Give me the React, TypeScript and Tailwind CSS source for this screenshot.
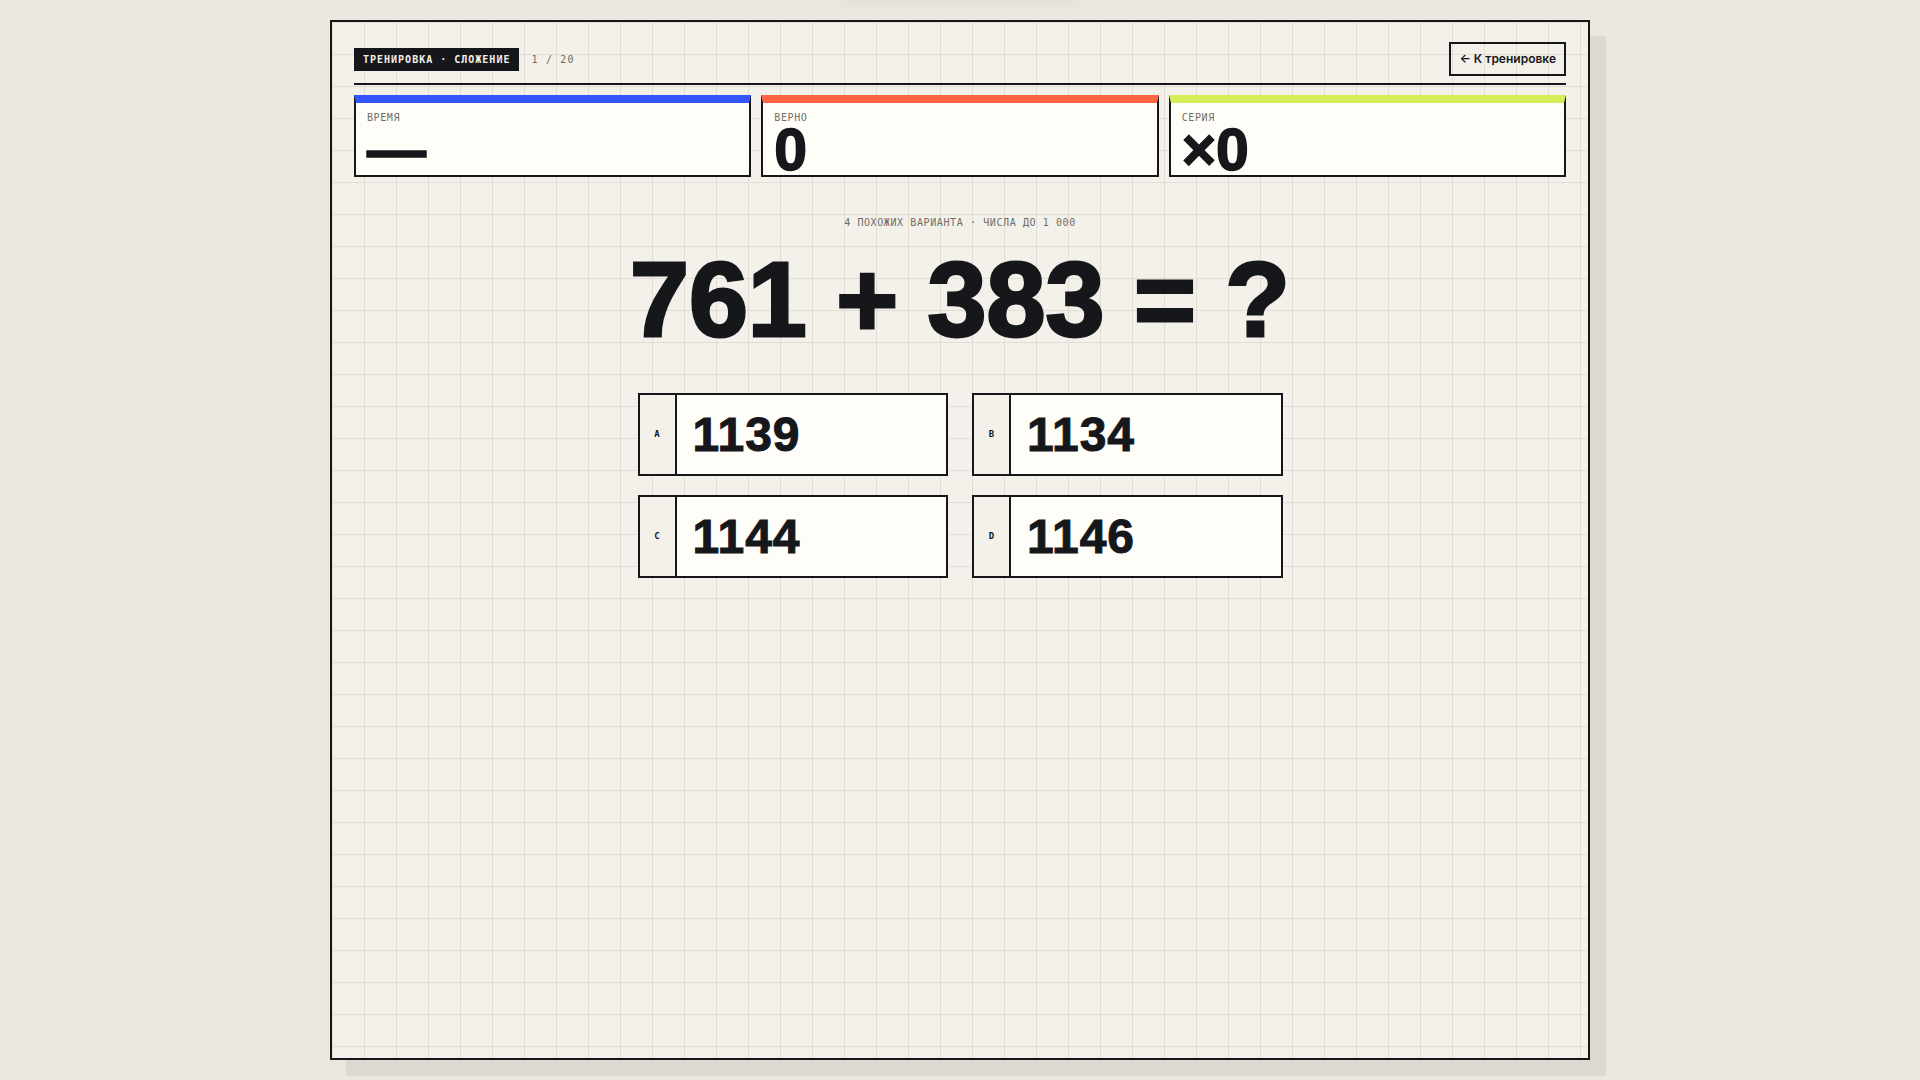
const mono = "font-['DejaVu_Sans_Mono',monospace]";
const display = "font-['Liberation_Sans',Arial,sans-serif]";

type Stat = {
	label: string;
	value: string;
	accent: string;
};

const stats: Stat[] = [
	{ label: "Время", value: "—", accent: "border-t-[#3355ff]" },
	{ label: "Верно", value: "0", accent: "border-t-[#ff6542]" },
	{ label: "Серия", value: "×0", accent: "border-t-[#d7ee58]" },
];

const options = [
	{ key: "A", value: 1139 },
	{ key: "B", value: 1134 },
	{ key: "C", value: 1144 },
	{ key: "D", value: 1146 },
];

function StatCard({ stat }: { stat: Stat }) {
	return (
		<div
			className={`flex h-[82px] flex-col border-2 border-t-8 border-[#16171b] ${stat.accent} bg-[#fefdf8] px-[11px] pt-[8px]`}
		>
			<span
				className={`${mono} h-[15px] text-[10px] leading-[13px] tracking-[0.06em] text-[#6f6d68] uppercase`}
			>
				{stat.label}
			</span>
			<span
				className={`${display} mt-[2px] text-[59px] leading-[44px] font-bold text-[#16171b] [-webkit-text-stroke:1.5px_#16171b]`}
			>
				{stat.value}
			</span>
		</div>
	);
}

function Option({ k, value }: { k: string; value: number }) {
	return (
		<button
			type="button"
			className="flex h-[83px] border-2 border-[#16171b] bg-[#fefdf8] text-left"
		>
			<span
				className={`${mono} flex w-[37px] shrink-0 items-center justify-center border-r-2 border-[#16171b] bg-[#f3f1ea] text-[9px] font-bold text-[#16171b]`}
			>
				{k}
			</span>
			<span
				className={`${display} flex items-center pl-[16px] text-[48px] font-bold tracking-[0.02em] text-[#16171b] [-webkit-text-stroke:1px_#16171b]`}
			>
				{value}
			</span>
		</button>
	);
}

export default function App() {
	return (
		<div className="relative min-h-screen overflow-hidden bg-[#ebe7de] py-[20px]">
			<div className="absolute -top-[52px] left-1/2 h-[50px] w-[226px] -translate-x-1/2 bg-[#ebe7de] shadow-[0_2px_14px_rgba(0,0,0,0.07)]" />

			<main className="mx-auto flex h-[1040px] w-[1260px] flex-col border-2 border-[#16171b] bg-[#f3f1ea] bg-[linear-gradient(to_right,#e2ded5_1px,transparent_1px),linear-gradient(to_bottom,#e2ded5_1px,transparent_1px)] bg-[size:32px_32px] px-[22px] pt-[20px] shadow-[16px_16px_0_#dcd9d1]">
				<header className="flex items-center justify-between border-b-2 border-[#16171b] pb-[7px]">
					<div className="flex items-center gap-[12px]">
						<span
							className={`${mono} bg-[#16171b] px-[9px] py-[5px] text-[10px] leading-[13px] font-bold tracking-[0.1em] text-[#f3f1ea] uppercase`}
						>
							Тренировка · Сложение
						</span>
						<span
							className={`${mono} text-[10px] tracking-[0.12em] text-[#6f6d68]`}
						>
							1 / 20
						</span>
					</div>
					<button
						type="button"
						className="h-[34px] border-2 border-[#16171b] px-[8px] font-['Inter',sans-serif] text-[12px] font-semibold text-[#16171b]"
					>
						← К тренировке
					</button>
				</header>

				<section className="mt-[10px] grid grid-cols-3 gap-[10px]">
					{stats.map((s) => (
						<StatCard key={s.label} stat={s} />
					))}
				</section>

				<section className="mt-[39px] flex flex-col items-center">
					<p
						className={`${mono} text-[10px] leading-[13px] tracking-[0.06em] text-[#6f6d68] uppercase`}
					>
						4 похожих варианта · числа до 1 000
					</p>
					<h1
						className={`${display} mt-[17px] text-[106px] leading-none font-bold text-[#16171b] [-webkit-text-stroke:3px_#16171b]`}
					>
						761 + 383 = ?
					</h1>
					<div className="mt-[41px] grid w-[645px] grid-cols-2 gap-x-[24px] gap-y-[19px]">
						{options.map((o) => (
							<Option key={o.key} k={o.key} value={o.value} />
						))}
					</div>
				</section>
			</main>
		</div>
	);
}
